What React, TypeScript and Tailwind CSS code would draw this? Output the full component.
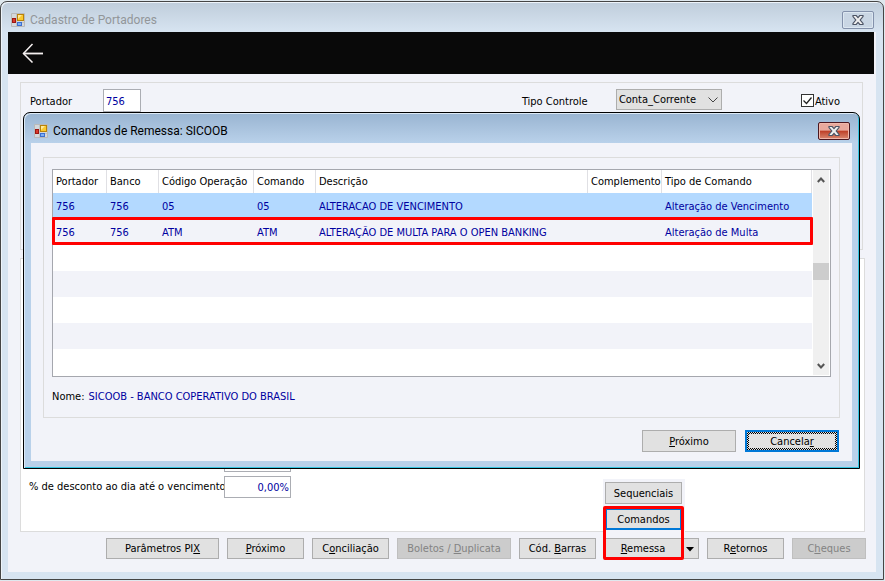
import type { ButtonHTMLAttributes } from 'react';

const commands = [
  {
    holder: '756',
    bank: '756',
    code: '05',
    command: '05',
    description: 'ALTERACAO DE VENCIMENTO',
    complement: '',
    type: 'Alteração de Vencimento',
    highlighted: false,
  },
  {
    holder: '756',
    bank: '756',
    code: 'ATM',
    command: 'ATM',
    description: 'ALTERAÇÃO DE MULTA PARA O OPEN BANKING',
    complement: '',
    type: 'Alteração de Multa',
    highlighted: true,
  },
];

const columns = [
  { title: 'Portador', width: 'w-[54px]' },
  { title: 'Banco', width: 'w-[52px]' },
  { title: 'Código Operação', width: 'w-[95px]' },
  { title: 'Comando', width: 'w-[62px]' },
  { title: 'Descrição', width: '' },
  { title: 'Complemento', width: 'w-[74px]' },
  { title: 'Tipo de Comando', width: 'w-[150px]' },
];

const emptyRows = ['bg-white', 'bg-[#f2f3f9]', 'bg-white', 'bg-[#f2f3f9]', 'bg-white'];

function FormIcon() {
  return (
    <svg width="14" height="14" viewBox="0 0 14 14" aria-hidden="true" className="shrink-0">
      <path d="M.5.5h13v13H.5z" fill="#d4d8dc" stroke="#b9b9b9" />
      <path d="M5.5 1v12M1 9.5h12" stroke="#c2c2c2" />
      <rect x="6.5" y="1.5" width="6" height="6" fill="#fbc92f" stroke="#b98309" />
      <path d="M7 2h4L7 6z" fill="#ffe99a" />
      <rect x="1.5" y="5.5" width="3" height="4" fill="#d8392b" stroke="#9d1712" />
      <rect x="6.5" y="9.5" width="4" height="3" fill="#7fb0f5" stroke="#3c6fd0" />
    </svg>
  );
}

function CloseIcon() {
  return (
    <svg width="12" height="10" viewBox="0 0 12 10" aria-hidden="true">
      <path
        d="M1 .5h3.2L6 2.6 7.8.5H11v1L8.2 5 11 8.500v1H7.800L6 7.400 4.200 9.500H1v-1L3.800 5 1 1.500z"
        fill="#f0f0f0"
        stroke="#4d5566"
        strokeWidth="1.200"
      />
    </svg>
  );
}

function PushButton({ className = '', ...props }: ButtonHTMLAttributes<HTMLButtonElement>) {
  return (
    <button
      type="button"
      className={`border border-[#adadad] bg-[#e1e1e1] pt-px text-center whitespace-nowrap disabled:border-[#bfbfbf] disabled:bg-[#cccccc] disabled:text-[#838383] ${className}`}
      {...props}
    />
  );
}

function CommandTable() {
  return (
    <div className="flex border border-[#a5a7ae] bg-white pb-px">
      <table className="w-full min-w-0 table-fixed border-separate border-spacing-0 text-left">
        <thead>
          <tr className="h-[23px]">
            {columns.map((column) => (
              <th
                key={column.title}
                className={`${column.width} border-r border-[#e0e0e4] p-0 pt-px pl-[3px] font-normal whitespace-nowrap`}
              >
                {column.title}
              </th>
            ))}
          </tr>
        </thead>
        <tbody className="text-[#0000a0]">
          {commands.map((row) => (
            <tr
              key={row.code}
              className={`relative h-[26px] whitespace-nowrap ${row.highlighted ? 'bg-[#f2f3f9]' : 'bg-[#b3d9ff]'}`}
            >
              <td className="p-0 pt-px pl-[3px]">
                {row.holder}
                {row.highlighted && (
                  <span className="pointer-events-none absolute -top-0.5 -right-px bottom-0 -left-px rounded-[1px] border-3 border-[#ff0000]" />
                )}
              </td>
              <td className="p-0 pt-px pl-[3px]">{row.bank}</td>
              <td className="p-0 pt-px pl-[3px]">{row.code}</td>
              <td className="p-0 pt-px pl-[3px]">{row.command}</td>
              <td className="p-0 pt-px pl-[3px]">{row.description}</td>
              <td className="p-0 pt-px pl-[3px]">{row.complement}</td>
              <td className="p-0 pt-px pl-[3px]">{row.type}</td>
            </tr>
          ))}
          {emptyRows.map((color, index) => (
            <tr key={index} className={`h-[26px] ${color}`}>
              <td colSpan={7} className="p-0" />
            </tr>
          ))}
        </tbody>
      </table>
      <div className="mx-px flex w-4 shrink-0 flex-col bg-[#f0f0f0]">
        <button type="button" aria-label="Rolar para cima" className="flex h-5 items-center justify-center">
          <svg width="8" height="6" viewBox="0 0 8 6">
            <path d="M.8 5 4 1.500 7.200 5" fill="none" stroke="#555" strokeWidth="2" />
          </svg>
        </button>
        <div className="mt-[73px] h-[17px] bg-[#cdcdcd]" />
        <button type="button" aria-label="Rolar para baixo" className="mt-auto flex h-[18px] items-center justify-center">
          <svg width="8" height="6" viewBox="0 0 8 6">
            <path d="M.8 1 4 4.500 7.200 1" fill="none" stroke="#555" strokeWidth="2" />
          </svg>
        </button>
      </div>
    </div>
  );
}

function CommandDialog() {
  return (
    <section
      role="dialog"
      aria-labelledby="dialog-title"
      className="absolute top-[110px] right-[23px] left-[22px] rounded-t-[7px] border border-black bg-[#b9d1ea] bg-linear-to-b from-[#99b4d1] to-[#b9d1ea] to-[30px] px-[7px] pb-[7px] shadow-[inset_1px_1px_0_#dce9f5,inset_-1px_-1px_0_#35c5e0]"
    >
      <header className="flex h-[30px] items-center pt-1.5 pl-[3px]">
        <FormIcon />
        <h2 id="dialog-title" className="ml-[5px] font-['Roboto',sans-serif] text-[12px]">
          Comandos de Remessa: SICOOB
        </h2>
        <button
          type="button"
          aria-label="Fechar comandos"
          className="mr-0.5 ml-auto flex h-[18px] w-8 items-center justify-center rounded-[2px] border border-[#4b1720] bg-linear-to-b from-[#e8a99d] from-45% via-[#bd3d26] via-50% to-[#d8866f] shadow-[inset_0_0_0_1px_#f0b8ab]"
        >
          <CloseIcon />
        </button>
      </header>
      <div className="bg-[#f2f3f9] px-3 pt-[14px] pb-[9px]">
        <div className="border border-[#dcdcdc] px-2 pt-[11px]">
          <CommandTable />
          <p className="flex h-10 items-center">
            <span>Nome:</span>
            <span className="ml-1 text-[#0000a0]">SICOOB - BANCO COPERATIVO DO BRASIL</span>
          </p>
        </div>
        <div className="mt-3 mr-px flex justify-end gap-[9px]">
          <PushButton className="h-[22px] w-[94px]">
            <u>P</u>róximo
          </PushButton>
          <button
            type="button"
            className="h-[22px] w-[94px] border-2 border-[#0078d7] bg-[repeating-conic-gradient(#000_0_25%,#e1e1e1_0_50%)] bg-[length:2px_2px] p-0.5"
          >
            <span className="flex h-full items-center justify-center bg-[#e1e1e1] pt-px">
              Cancela<u>r</u>
            </span>
          </button>
        </div>
      </div>
    </section>
  );
}

function RemittanceMenu() {
  return (
    <div className="relative flex">
      <PushButton className="w-[78px]">
        <u>R</u>emessa
      </PushButton>
      <PushButton aria-label="Mais opções de remessa" className="-ml-px flex w-[18px] items-center justify-center">
        <svg width="8" height="5" viewBox="0 0 8 5">
          <path d="M0 0h8L4 4.500z" fill="#000" />
        </svg>
      </PushButton>
      <div className="absolute bottom-full -left-px flex w-[82px] flex-col gap-1 bg-[#f2f3f9] pt-[3px] pr-[3px] pb-2 pl-0.5">
        <PushButton className="h-[22px]">Sequenciais</PushButton>
        <button type="button" className="h-[22px] border-2 border-[#0078d7] bg-[#e1e1e1] pt-px">
          Comandos
        </button>
      </div>
      <span className="pointer-events-none absolute -top-8 -left-px h-[54px] w-[81px] rounded-[2px] border-3 border-[#ff0000]" />
    </div>
  );
}

export default function App() {
  return (
    <div className="flex min-h-screen flex-col bg-[#dfe8ee] pt-px pr-px pb-px font-['DejaVu_Sans_Condensed','Liberation_Sans',sans-serif] text-[11px] leading-[14px] text-black">
      <main className="relative flex grow flex-col rounded-t-[7px] border border-[#454545] bg-[#d7e4f1] bg-linear-to-b from-[#bfcddb] to-[#d7e4f1] to-[30px] px-[7px] pb-[7px] shadow-[inset_1px_1px_0_#eef4fa]">
        <header className="flex h-[30px] items-center pt-1.5 pl-[3px]">
          <FormIcon />
          <h1 className="ml-[5px] font-['Roboto',sans-serif] text-[12px] text-[#929699]">Cadastro de Portadores</h1>
          <button
            type="button"
            aria-label="Fechar cadastro"
            className="mr-0.5 ml-auto flex h-[18px] w-8 items-center justify-center rounded-[2px] border border-[#8391ab] bg-[#c9d6e4] shadow-[inset_0_0_0_1px_#dce7f1]"
          >
            <CloseIcon />
          </button>
        </header>

        <div className="flex grow flex-col bg-[#f2f3f9]">
          <nav className="mr-0.5 flex h-[42px] shrink-0 items-center bg-[#090909] pl-[14px]">
            <button type="button" aria-label="Voltar">
              <svg width="22" height="20" viewBox="0 0 22 20" fill="none" stroke="#f4efef">
                <path d="M10.500 1 1.500 10.500l9 9" strokeWidth="1.500" />
                <path d="M1.500 10.500H21" strokeWidth="1.800" />
              </svg>
            </button>
          </nav>

          <div className="mt-2 mr-[13px] ml-3 flex h-[168px] shrink-0 items-start border border-[#dcdcdc] pt-1.5 pr-[22px] pl-[9px]">
            <label htmlFor="holder" className="mt-1.5 w-[73px]">
              Portador
            </label>
            <input
              id="holder"
              defaultValue="756"
              className="h-[23px] w-[38px] border border-[#abadb3] bg-white px-0.5 pt-px text-[#0000a0]"
            />
            <label htmlFor="control-type" className="mt-1.5 ml-auto w-[94px]">
              Tipo Controle
            </label>
            <div className="relative">
              <select
                id="control-type"
                className="h-[21px] w-[106px] appearance-none border border-[#adadad] bg-[#e1e1e1] pt-px pl-0.5"
              >
                <option>Conta_Corrente</option>
              </select>
              <svg width="10" height="6" viewBox="0 0 10 6" className="pointer-events-none absolute top-2 right-1">
                <path d="M.5.5 5 5 9.500.5" fill="none" stroke="#444" />
              </svg>
            </div>
            <label className="mt-[5px] ml-[79px] flex items-start gap-px">
              <span className="relative flex">
                <input type="checkbox" defaultChecked className="peer size-[13px] appearance-none border border-[#333] bg-white" />
                <svg
                  width="13"
                  height="13"
                  viewBox="0 0 13 13"
                  className="pointer-events-none absolute inset-0 hidden peer-checked:block"
                >
                  <path d="m2.500 6.500 3 3 5-6" fill="none" stroke="#222" strokeWidth="1.300" />
                </svg>
              </span>
              <span className="pt-px">Ativo</span>
            </label>
          </div>

          <div className="mt-2 mr-[11px] ml-3 flex grow flex-col justify-end border border-[#dcdcdc] bg-white pb-[33px] pl-2">
            <input aria-label="% de juros" className="mb-1 ml-[195px] h-[22px] w-[67px] border border-[#abadb3] bg-white" />
            <div className="flex items-center">
              <label htmlFor="discount" className="w-[195px] whitespace-nowrap">
                % de desconto ao dia até o vencimento
              </label>
              <input
                id="discount"
                defaultValue="0,00%"
                className="h-[22px] w-[67px] border border-[#abadb3] bg-white pt-px pr-px text-right text-[#0000a0]"
              />
            </div>
          </div>

          <div className="mt-1.5 mr-2.5 mb-[13px] flex h-[21px] justify-end gap-2">
            <PushButton className="w-[113px]">
              Parâmetros PI<u>X</u>
            </PushButton>
            <PushButton className="w-[77px]">
              <u>P</u>róximo
            </PushButton>
            <PushButton className="w-[77px]">
              C<u>o</u>nciliação
            </PushButton>
            <PushButton disabled className="w-[114px]">
              Boletos / <u>D</u>uplicata
            </PushButton>
            <PushButton className="w-[77px]">
              Cód. <u>B</u>arras
            </PushButton>
            <RemittanceMenu />
            <PushButton className="w-[77px]">
              R<u>e</u>tornos
            </PushButton>
            <PushButton disabled className="w-[74px]">
              C<u>h</u>eques
            </PushButton>
          </div>
        </div>

        <CommandDialog />
      </main>
    </div>
  );
}
